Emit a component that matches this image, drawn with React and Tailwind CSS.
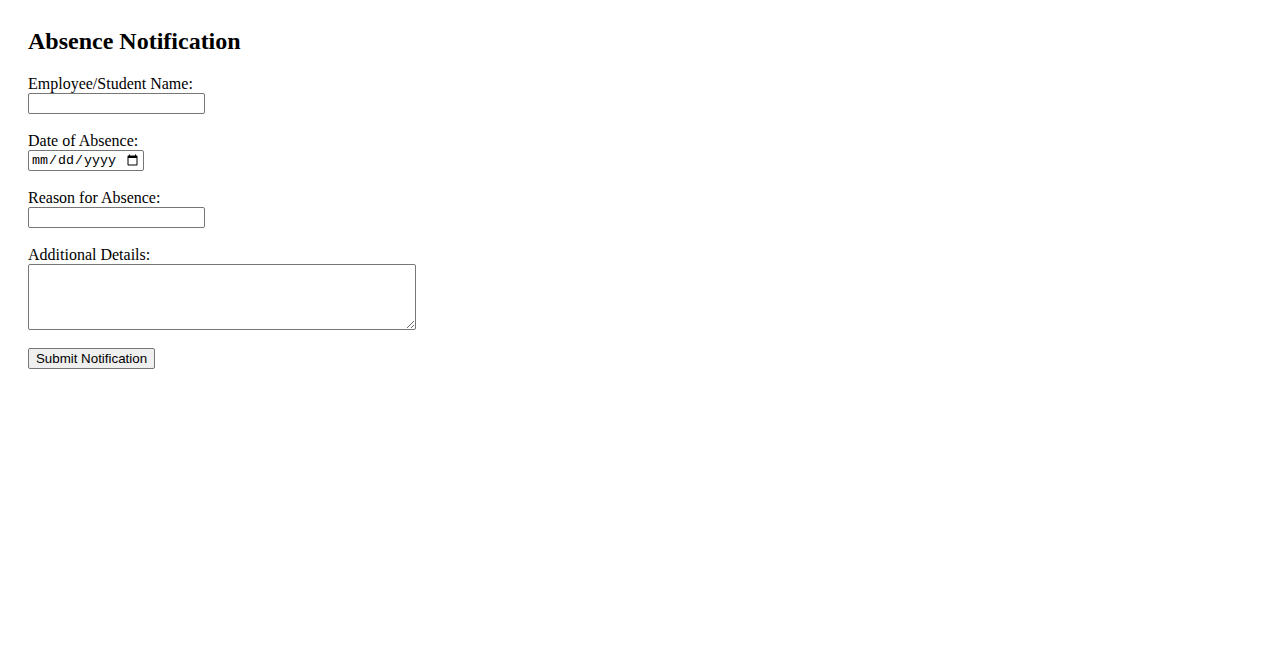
import React, { useState } from 'react';

const fieldClass = "block border border-[#767676] rounded-[2px] bg-white px-[2px] text-[13.33px] font-['Liberation_Sans',Arial,sans-serif] outline-none";

const App = () => {
    const [formData, setFormData] = useState({ name: '', date: '', reason: '', details: '' });

    const handleChange = (e) => {
        const { name, value } = e.target;
        setFormData(prev => ({ ...prev, [name]: value }));
    };

    const handleSubmit = (e) => {
        e.preventDefault();
    };

    return (
        <div className="min-h-screen bg-white px-7 pt-7 text-black font-['Liberation_Serif','Times_New_Roman',serif]">
            <h2 className="text-[24px] font-bold leading-[27px] mb-5">Absence Notification</h2>
            <form onSubmit={handleSubmit} className="flex flex-col items-start">
                {/* Name */}
                <label htmlFor="name" className="block text-[16px] leading-[18px]">Employee/Student Name:</label>
                <input
                    id="name"
                    type="text"
                    name="name"
                    value={formData.name}
                    onChange={handleChange}
                    className={`${fieldClass} w-[177px] h-[21px] mb-[18px]`}
                />

                {/* Date */}
                <label htmlFor="date" className="block text-[16px] leading-[18px]">Date of Absence:</label>
                <input
                    id="date"
                    type="date"
                    name="date"
                    value={formData.date}
                    onChange={handleChange}
                    className="block border border-[#767676] rounded-[2px] bg-white pl-[2px] pr-[2px] text-[13.33px] font-['Liberation_Mono',monospace] outline-none w-[116px] h-[21px] mb-[18px]"
                />

                {/* Reason */}
                <label htmlFor="reason" className="block text-[16px] leading-[18px]">Reason for Absence:</label>
                <input
                    id="reason"
                    type="text"
                    name="reason"
                    value={formData.reason}
                    onChange={handleChange}
                    className={`${fieldClass} w-[177px] h-[21px] mb-[18px]`}
                />

                {/* Details */}
                <label htmlFor="details" className="block text-[16px] leading-[18px]">Additional Details:</label>
                <textarea
                    id="details"
                    name="details"
                    value={formData.details}
                    onChange={handleChange}
                    className="block border border-[#767676] rounded-[2px] bg-white p-[2px] text-[13.33px] font-['Liberation_Mono',monospace] outline-none w-[388px] h-[66px] mb-[18px] resize"
                />

                <button
                    type="submit"
                    className="block h-[21px] w-[127px] border border-[#767676] rounded-[2px] bg-[#efefef] text-[13.33px] leading-none font-['Liberation_Sans',Arial,sans-serif] text-black"
                >
                    Submit Notification
                </button>
            </form>
        </div>
    );
};

export default App;
